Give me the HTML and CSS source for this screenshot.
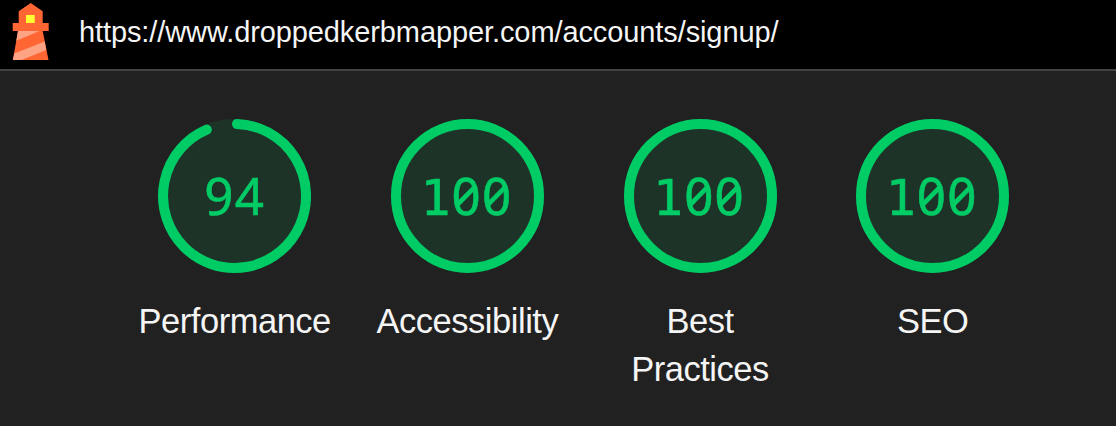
FILE: index.html
```
<!DOCTYPE html>
<html lang="en">
<head>
<meta charset="utf-8">
<title>Lighthouse report</title>
<link rel="stylesheet" href="styles.css">
</head>
<body>
<header class="topbar">
  <svg class="logo" viewBox="0 0 37 57" width="37" height="57" aria-hidden="true">
    <path fill="#ff6633" d="M6.700 8.300 18.700 0l12 8.300V20h6v8h-6L36.500 57H.9L6 28H.7v-8h6z"/>
    <path fill="#ffff33" d="M14 12h8.700v8H14z"/>
    <path fill="#ffa385" d="M6 28h21.500L4.300 37.700zM32.700 38.500l1.500 8.500L9.500 57H.9l1.400-6.500z"/>
  </svg>
  <span class="url">https://www.droppedkerbmapper.com/accounts/signup/</span>
</header>
<main class="scores">
  <div class="gauge">
    <div class="dial">
      <svg class="ring" viewBox="0 0 153 154"><ellipse class="base" cx="76.500" cy="77" rx="76.500" ry="77"/><path class="arc" d="M79 5A71.500 72 0 1 1 48.800 10.600"/></svg>
      <span class="score">94</span>
    </div>
    <span class="label">Performance</span>
  </div>
  <div class="gauge">
    <div class="dial">
      <svg class="ring" viewBox="0 0 153 154"><ellipse class="base" cx="76.500" cy="77" rx="76.500" ry="77"/><ellipse class="arc" cx="76.500" cy="77" rx="71.500" ry="72"/></svg>
      <span class="score"><span class="one">1</span>00</span>
    </div>
    <span class="label">Accessibility</span>
  </div>
  <div class="gauge">
    <div class="dial">
      <svg class="ring" viewBox="0 0 153 154"><ellipse class="base" cx="76.500" cy="77" rx="76.500" ry="77"/><ellipse class="arc" cx="76.500" cy="77" rx="71.500" ry="72"/></svg>
      <span class="score"><span class="one">1</span>00</span>
    </div>
    <span class="label">Best<br>Practices</span>
  </div>
  <div class="gauge">
    <div class="dial">
      <svg class="ring" viewBox="0 0 153 154"><ellipse class="base" cx="76.500" cy="77" rx="76.500" ry="77"/><ellipse class="arc" cx="76.500" cy="77" rx="71.500" ry="72"/></svg>
      <span class="score"><span class="one">1</span>00</span>
    </div>
    <span class="label">SEO</span>
  </div>
</main>
</body>
</html>
```

FILE: styles.css
```
* { box-sizing: border-box; }
body {
  margin: 0;
  height: 426px;
  overflow: hidden;
  background: #212121;
  color: #f5f5f5;
  font-family: "Liberation Sans", Arial, sans-serif;
}
.topbar {
  display: flex;
  height: 71px;
  padding: 3px 0 0 12px;
  background: #000;
  border-bottom: 2px solid #424242;
}
.logo { flex: none; }
.url {
  margin-left: 30px;
  font-size: 29px;
  line-height: 58px;
  letter-spacing: -0.100px;
  white-space: nowrap;
}
.scores {
  display: grid;
  grid-template-columns: repeat(4, 232.670px);
  padding: 48px 0 0 118.400px;
}
.gauge {
  display: flex;
  flex-direction: column;
  align-items: center;
}
.dial {
  display: grid;
  width: 153px;
  height: 154px;
}
.ring, .score { grid-area: 1 / 1; }
.ring { width: 153px; height: 154px; }
.base { fill: #1e3328; }
.arc {
  fill: none;
  stroke: #00cc66;
  stroke-width: 10;
  stroke-linecap: round;
}
.score {
  place-self: center;
  padding-bottom: 3px;
  color: #00cc66;
  font: 51px/60px "Noto Sans", sans-serif;
  font-feature-settings: "zero" 1, "tnum" 1;
  letter-spacing: 1.200px;
  -webkit-text-stroke: 0.600px #00cc66;
}
.one {
  margin-left: -2px;
  font-family: "DejaVu Sans Mono", monospace;
  font-size: 50px;
  line-height: 0;
  letter-spacing: 1px;
}
.label {
  margin-top: 24px;
  font-size: 34.500px;
  line-height: 48px;
  text-align: center;
  letter-spacing: -0.480px;
}
```
